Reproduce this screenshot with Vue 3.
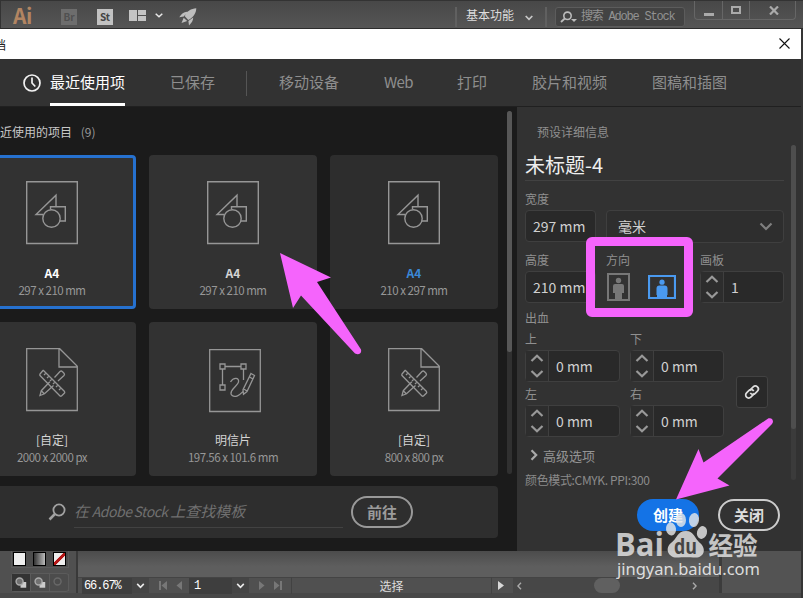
<script setup>
const groups = [
  [{ label: '最近使用项', active: true }, { label: '已保存' }],
  [{ label: '移动设备' }, { label: 'Web', latin: true }, { label: '打印' }, { label: '胶片和视频' }, { label: '图稿和插图' }]
]
const presets = [
  { name: 'A4', size: '297 x 210 mm', icon: 'shapes', state: 'selected' },
  { name: 'A4', size: '297 x 210 mm', icon: 'shapes', state: '' },
  { name: 'A4', size: '210 x 297 mm', icon: 'shapes', state: 'hover' },
  { name: '[自定]', size: '2000 x 2000 px', icon: 'tools', state: '' },
  { name: '明信片', size: '197.56 x 101.6 mm', icon: 'vector', state: '' },
  { name: '[自定]', size: '800 x 800 px', icon: 'tools', state: '' }
]
const bleeds = [['上', '下'], ['左', '右']]
</script>

<template>
  <div class="window">
    <header class="appbar">
      <span class="ai">Ai</span>
      <span class="badge br">Br</span>
      <span class="badge st">St</span>
      <svg class="layout" width="17" height="11" viewBox="0 0 17 11"><path fill="#c4c4c4" d="M0 0h8v11H0zM9 0h8v5H9zM9 6h8v5H9z" /></svg>
      <svg class="caret1" width="8" height="5" viewBox="0 0 8 5"><path d="M.7.7 4 3.8 7.3.7" fill="none" stroke="#e8e8e8" stroke-width="1.5" /></svg>
      <svg class="rocket" width="18" height="18" viewBox="0 0 18 18"><path fill="#bdbdbd" d="M17.3.3C12 .8 7.8 3 5.8 8.2L9.3 11.900C14.500 9.500 17 5.500 17.300.3zM8.500 3.800C5 3.600 2.500 5.800.3 9.200l4.500-.8zM14.200 9.600c0 3-1.600 5.500-4.200 8l-.6-4.700zM4.700 9.800 2.500 14.900l5.700-1.900z" /></svg>
      <i class="vline"></i>
      <span class="workspace">基本功能</span>
      <svg class="caret2" width="8" height="6" viewBox="0 0 8 6"><path d="M.7 1 4 4.300 7.300 1" fill="none" stroke="#c8c8c8" stroke-width="1.700" /></svg>
      <i class="vline"></i>
      <div class="stock">
        <svg width="18" height="12" viewBox="0 0 18 12"><circle cx="7.500" cy="4.800" r="3.700" fill="none" stroke="#bbb" stroke-width="1.600" /><path d="M4.800 7.500 1 11" stroke="#bbb" stroke-width="1.800" /><path d="M11 8h6l-3 3z" fill="#bbb" /></svg>
        <span>搜索 Adobe Stock</span>
      </div>
      <div class="winbtns">
        <span><svg width="10" height="13" viewBox="0 0 10 13"><path d="M0 9h10v3H0z" fill="#aaa" /></svg></span>
        <span><svg width="10" height="8" viewBox="0 0 10 8"><path d="M1 1h8v6H1z" fill="none" stroke="#aaa" stroke-width="2" /></svg></span>
        <span><svg width="10" height="9" viewBox="0 0 10 9"><path d="m1 .5 8 8M9 .5l-8 8" stroke="#aaa" stroke-width="2.200" /></svg></span>
      </div>
    </header>

    <main class="dialog">
      <div class="titlebar">
        <span>档</span>
        <svg width="11" height="11" viewBox="0 0 11 11"><path d="m.5.5 10 10M10.500.5l-10 10" stroke="#111" stroke-width="1.100" /></svg>
      </div>
      <nav class="tabs">
        <svg class="clock" width="18" height="18" viewBox="0 0 18 18" fill="none" stroke="#f2f2f2" stroke-width="1.700"><circle cx="9" cy="9" r="8" /><path d="M9 3.500V9l3.300 3.500" /></svg>
        <template v-for="(group, g) in groups" :key="g">
          <i v-if="g" class="tabsep"></i>
          <div class="tabgroup">
            <span v-for="tab in group" :key="tab.label" class="tab" :class="{ active: tab.active, latin: tab.latin }">{{ tab.label }}</span>
          </div>
        </template>
      </nav>

      <div class="body">
        <section class="gallery">
          <div class="scroller">
            <div class="list">
              <h2 class="recent">近使用的项目 <small>(9)</small></h2>
              <div class="cards">
                <article v-for="(p, i) in presets" :key="i" class="card" :class="p.state">
                  <svg v-if="p.icon === 'shapes'" class="doc" width="52" height="64" viewBox="0 0 52 64" fill="none" stroke="#969696" stroke-width="1.400">
                    <path d="M.7.7h50.600v61.800H.7z" />
                    <circle cx="25.500" cy="37.500" r="8.700" />
                    <path d="M17.200 33.500H10L30 14.200v11.600M24.500 28.500v-2.700h14.800V40H34" />
                  </svg>
                  <svg v-else-if="p.icon === 'tools'" class="doc" width="52" height="64" viewBox="0 0 52 64" fill="none" stroke="#969696" stroke-width="1.300">
                    <path d="M.7.7h33l17.600 17.600v44.200H.7zM33 1v18h18" />
                    <path d="m17.500 22.500 21 21a1.300 1.300 0 0 1 0 1.500l-3 3a1.300 1.300 0 0 1-1.500 0l-20-20.500a1.300 1.300 0 0 1 0-1.500l3-3.500zM20 25l-2 2M23 28l-2 2M26 31l-2 2M29 34l-2 2M32 37l-2 2M35 40l-2 2" />
                    <path d="m28.500 29.500 5.500-6q1.200-1 2.300 0l1.700 1.700q1 1.100 0 2.300L32 33M27.500 37.500l-9 8.300-4.500 1.700 1.300-4.800 8.500-9M15.500 43l3 3" />
                  </svg>
                  <svg v-else class="doc vector" width="52" height="64" viewBox="0 0 52 64" fill="none" stroke="#969696" stroke-width="1.300">
                    <path d="M.7.7h50.600v61.800H.7zM11 15h5v5h-5zM32 15h5v5h-5zM11 36h5v5h-5zM16 17.500h16M13.500 20v16M34.500 20v11" />
                    <path d="M21.500 33c3-5 9-4.500 8 .2-.6 2.600-5 5-7 9-1.700 3.700 1.500 6.400 6 4.600 2.500-1 4-2.800 5.500-4.300M42 24.500l3.500 2-7.500 16-3.500 2.800-.5-4.700zM34 39.500l4 2.500M40.500 28l3.500 2" />
                  </svg>
                  <h3>{{ p.name }}</h3>
                  <p>{{ p.size }}</p>
                </article>
              </div>
            </div>
            <div class="track"><i></i></div>
          </div>
          <div class="find">
            <svg width="18" height="18" viewBox="0 0 18 18" fill="none" stroke="#a2a2a2"><circle cx="11" cy="7" r="5.600" stroke-width="1.800" /><path d="m6.900 11-5.400 5.500" stroke-width="2.500" /></svg>
            <div class="findinput">在 <span>Adobe Stock</span> 上查找模板</div>
            <button class="pill go">前往</button>
          </div>
        </section>

        <aside class="details">
          <div class="caption">预设详细信息</div>
          <div class="form">
            <div class="fields">
              <div class="docname">未标题-4</div>
              <label class="lb w">宽度</label>
              <div class="row">
                <div class="input num">297 mm</div>
                <div class="input unit"><span>毫米</span><svg width="14" height="9" viewBox="0 0 14 9"><path d="m1.500 1.500 5.500 5.500 5.500-5.500" fill="none" stroke="#7f7f7f" stroke-width="2.200" /></svg></div>
              </div>
              <div class="sizes">
                <div><label class="lb">高度</label><div class="input num">210 mm</div></div>
                <div>
                  <label class="lb">方向</label>
                  <div class="orient">
                    <svg width="23" height="28" viewBox="0 0 23 28"><path d="M1 1h21v26H1z" fill="none" stroke="#777" stroke-width="2" /><circle cx="11.500" cy="7.500" r="2.700" fill="#777" /><path d="M8 11h7q2 0 2 2v7h-2v6H8v-6H6v-7q0-2 2-2" fill="#777" /></svg>
                    <svg width="28" height="24" viewBox="0 0 28 24"><path d="M1 1h26v22H1z" fill="none" stroke="#4a9af0" stroke-width="2.200" /><circle cx="14" cy="7.200" r="2.600" fill="#4a9af0" /><path d="M11.500 10.500h5q3 0 3 3V20H19v3H9v-3h-.5v-6.500q0-3 3-3" fill="#4a9af0" /></svg>
                  </div>
                </div>
                <div>
                  <label class="lb">画板</label>
                  <div class="input step board"><span class="arrows"><svg width="14" height="24" viewBox="0 0 14 24"><path d="M1.500 7 7 1.700 12.500 7M1.500 17 7 22.300 12.500 17" fill="none" stroke="#999" stroke-width="2.200" /></svg></span><b>1</b></div>
                </div>
              </div>
              <div class="bleedtitle">出血</div>
              <div class="bleedbox">
                <div class="bleeds">
                  <div v-for="(pair, r) in bleeds" :key="r" class="pair">
                    <div v-for="side in pair" :key="side">
                      <label class="side">{{ side }}</label>
                      <div class="input step"><span class="arrows"><svg width="14" height="24" viewBox="0 0 14 24"><path d="M1.500 7 7 1.700 12.500 7M1.500 17 7 22.300 12.500 17" fill="none" stroke="#999" stroke-width="2.200" /></svg></span><b>0 mm</b></div>
                    </div>
                  </div>
                </div>
                <div class="link"><svg width="18" height="18" viewBox="0 0 18 18" fill="none" stroke="#ddd" stroke-width="1.700"><g transform="rotate(-45 9 9)"><path d="M9.800 11.800H4.500a3 3 0 0 1 0-6H8a3 3 0 0 1 2.800 3.800" /><path d="M8.200 6.200h5.300a3 3 0 0 1 0 6H10a3 3 0 0 1-2.800-3.800" /></g></svg></div>
              </div>
              <div class="advanced"><svg width="8" height="12" viewBox="0 0 8 12"><path d="m1.500 1.200 4.700 4.800-4.700 4.800" fill="none" stroke="#aaa" stroke-width="2.200" /></svg>高级选项</div>
              <div class="mode">颜色模式:CMYK. PPI:300</div>
            </div>
            <div class="track"><i></i></div>
          </div>
          <div class="actions">
            <button class="pill create">创建</button>
            <button class="pill close">关闭</button>
          </div>
        </aside>
      </div>
    </main>

    <footer class="workspacebar">
      <div class="toolbox">
        <div class="swatches"><i class="white"></i><i class="grad"></i><i class="none"></i></div>
        <div class="modes">
          <svg v-for="n in 3" :key="n" width="19" height="17" viewBox="0 0 19 17" :class="'m' + n"><path d="M9 8h6v6H9z" class="sq" /><circle cx="8" cy="7.500" r="3.700" /></svg>
        </div>
      </div>
      <div class="canvas">
        <div class="art"></div>
        <div class="status">
          <span class="zoom">66.67%</span>
          <svg class="drop" width="8" height="6" viewBox="0 0 8 6"><path d="M.7.9 4 4.300 7.300.9" fill="none" stroke="#ececec" stroke-width="1.600" /></svg>
          <svg class="nav" width="24" height="9" viewBox="0 0 24 9"><path d="M0 0h2v9H0zM8 0v9L2.500 4.500zM23 0v9l-5.500-4.500z" fill="#777" /></svg>
          <span class="page">1</span>
          <svg class="drop" width="8" height="6" viewBox="0 0 8 6"><path d="M.7.9 4 4.300 7.300.9" fill="none" stroke="#ececec" stroke-width="1.600" /></svg>
          <svg class="nav" width="24" height="9" viewBox="0 0 24 9"><path d="M0 0v9l5.500-4.500zM15 0v9l5.500-4.500zM21 0h2v9h-2z" fill="#777" /></svg>
          <span class="tool">选择</span>
          <svg class="play" width="6" height="9" viewBox="0 0 6 9"><path d="M0 0v9l6-4.500z" fill="#d8d8d8" /></svg>
          <div class="hscroll">
            <svg width="5" height="8" viewBox="0 0 5 8"><path d="M4 .7.900 4 4 7.300" fill="none" stroke="#aaa" stroke-width="1.400" /></svg>
            <i></i>
            <svg width="5" height="8" viewBox="0 0 5 8"><path d="M1 .7 4.100 4 1 7.300" fill="none" stroke="#aaa" stroke-width="1.400" /></svg>
          </div>
        </div>
      </div>
      <div class="rightdock"></div>
    </footer>

    <svg class="marks" width="803" height="598" viewBox="0 0 803 598">
      <g fill="#f564fc">
        <path d="M280 253 331 277.500 317 282 361 349.500Q362 354 357.500 354.300L355 353.500 301 295.500 293 308z" />
        <path d="M676 499.500 698.500 449 703.500 462.500 768.500 418.300Q773 417.500 773 422L772 424 717.500 478.500 729.500 485.500z" />
      </g>
      <rect x="590.500" y="241.500" width="98" height="71" rx="1.500" fill="none" stroke="#f564fc" stroke-width="9" stroke-linejoin="round" />
      <g class="watermark">
        <text x="615" y="556" class="brand" textLength="49" lengthAdjust="spacingAndGlyphs">Bai</text>
        <ellipse cx="671" cy="529" rx="5" ry="6.500" transform="rotate(-8 671 529)" />
        <ellipse cx="681" cy="520" rx="5" ry="7" />
        <ellipse cx="694" cy="520" rx="5" ry="7" transform="rotate(8 694 520)" />
        <ellipse cx="702" cy="532.500" rx="5" ry="6.500" transform="rotate(15 702 532.500)" />
        <path d="M686 531C677 531 677 539 671 543C664 549 669 558 677 557.500C682 557 690 557 695 557.500C704 558 707 549 700 543C695 539 694 531 686 531" />
        <text x="674" y="553.500" class="du" textLength="23" lengthAdjust="spacingAndGlyphs">du</text>
        <text x="708.500" y="555" class="jy" textLength="49">经验</text>
        <text x="617" y="575" class="url" textLength="143" lengthAdjust="spacingAndGlyphs">jingyan.baidu.com</text>
      </g>
    </svg>
  </div>
</template>

<style>
body { margin: 0; overflow: hidden; background: #535353; }
</style>

<style scoped>
* { box-sizing: border-box; }
i, b { font-style: normal; font-weight: 400; display: block; }
svg { display: block; flex: none; }
.window { position: relative; width: 803px; height: 598px; overflow: hidden; display: flex; flex-direction: column; background: #353535; font-family: "Noto Sans CJK SC", "Noto Sans", sans-serif; white-space: nowrap; }

.appbar { display: grid; grid-template-columns: 48px 36px 32px 26px 24px 276px 11px 59px 20px 10px 139px 109px; width: 803px; height: 29px; padding-left: 12px; border-top: 1px solid #333; border-bottom: 1px solid #2c2c2c; border-left: 1px solid #333; background: linear-gradient(#484848, #555); }
.ai { font: 700 21px/28px "Noto Sans CJK SC", sans-serif; color: #b28562; letter-spacing: -.5px; }
.badge { width: 16px; height: 16px; margin-top: 8px; font: 700 10px/16px "Noto Sans CJK SC", sans-serif; text-align: center; }
.br { background: #6d6d6d; color: #505050; }
.st { background: #c2c2c2; color: #444; }
.layout { margin-top: 9px; }
.caret1 { margin-top: 12px; }
.rocket { margin-top: 7px; }
.vline { width: 2px; height: 20px; margin-top: 6px; background: #606060; }
.workspace { font-size: 12px; line-height: 28px; color: #ddd; }
.caret2 { margin-top: 14px; }
.stock { display: flex; align-items: center; width: 130px; height: 20px; margin-top: 6px; padding: 0 0 1px 4px; gap: 3px; border: 1px solid #5c5c5c; border-radius: 3px; background: #434343; color: #929292; font: 12px/16px "Liberation Mono", "Noto Sans CJK SC", monospace; }
.stock span { letter-spacing: -1.2px; }
.winbtns { display: grid; grid-template-columns: 28px 27px 47px; width: 102px; height: 19px; border: 1px solid #666; border-top: 0; border-radius: 0 0 4px 4px; }
.winbtns span { display: flex; align-items: center; justify-content: center; border-right: 1px solid #666; }
.winbtns span:last-child { border: 0; }

.dialog { width: 801px; height: 522px; display: flex; flex-direction: column; background: #323232; }
.titlebar { height: 30px; flex: none; display: flex; justify-content: space-between; align-items: center; padding-right: 11px; background: #fff; color: #222; font-size: 12px; }
.titlebar span { margin-left: -6px; }
.titlebar svg { margin-top: -2px; }
.tabs { height: 48px; flex: none; display: flex; padding-left: 23px; border-bottom: 1px solid #202020; }
.clock { margin: 15px 9px 0 0; }
.tabgroup { display: flex; gap: 45px; }
.tab { height: 47px; font-size: 15px; line-height: 46px; color: #8e8e8e; }
.tab.latin { width: 28px; letter-spacing: -.6px; }
.tab.active { color: #fff; border-bottom: 3px solid #fff; }
.tabsep { width: 1px; height: 25px; margin: 12px 32px 0 31px; background: #555; }
.body { flex: 1; min-height: 0; display: flex; }
.gallery { width: 517px; padding-top: 4px; background: #1b1b1b; }
.scroller { display: flex; height: 375px; }
.list { width: 507px; overflow: hidden; }
.recent { height: 44px; margin: 0; font-size: 12px; font-weight: 400; line-height: 42px; color: #c8c8c8; }
.recent small { margin-left: 6px; font-size: 12px; color: #999; }
.cards { display: grid; grid-template-columns: repeat(3, 168px); grid-auto-rows: 154px; gap: 13px; margin-left: -32px; }
.card { display: flex; flex-direction: column; align-items: center; padding-top: 26px; border-radius: 4px; background: #323232; }
.card.selected { padding-top: 23px; border: 3px solid #2671cf; }
.card.hover { background: #2d2d2d; }
.doc.vector { margin-left: 4px; margin-top: 1px; margin-bottom: -1px; }
.card h3 { margin: 20px 0 0; font-size: 12px; font-weight: 400; line-height: 16px; color: #d4d4d4; }
.card h3, .card p { height: 17px; }
.card.selected h3 { font-weight: 700; color: #fff; }
.card:nth-child(2) h3 { font-weight: 700; }
.card.hover h3 { font-weight: 700; color: #3b88d6; }
.card p { margin: 0; font-size: 11.5px; letter-spacing: -.5px; line-height: 16px; color: #979797; }
.track { width: 5px; border-radius: 3px; background: #303030; }
.scroller .track { height: 363px; }
.track i { height: 241px; border-radius: 3px; background: #575757; }
.find { display: flex; width: 498px; height: 52px; padding-left: 48px; border-radius: 0 4px 4px 0; background: #2e2e2e; }
.find > svg { margin-top: 17px; }
.findinput { width: 269px; height: 42px; margin: 0 8px; border-bottom: 1px solid #424242; color: #707070; font-size: 15px; font-style: italic; line-height: 50px; word-spacing: -.7px; }
.findinput span { font-size: 14px; letter-spacing: -.45px; }
.pill { width: 62px; height: 32px; padding: 0; border: 2px solid #999; border-radius: 16px; background: transparent; color: #9b9b9b; font: 700 15px/28px "Noto Sans CJK SC", sans-serif; }
.go { margin-top: 10px; }

.details { width: 284px; padding-left: 8px; }
.caption { height: 38px; padding-left: 12px; font-size: 12px; line-height: 50px; color: #8f8f8f; }
.form { display: flex; height: 341px; }
.fields { width: 266px; overflow: hidden; }
.docname { width: 259px; height: 36px; border-bottom: 1px solid #424242; font-size: 20px; line-height: 39px; color: #eee; }
.lb, .side { display: block; font-size: 12px; color: #909090; }
.lb { height: 28px; line-height: 35px; }
.lb.w { height: 29px; }
.row { display: flex; gap: 10px; height: 33px; }
.input { height: 32px; border: 1px solid #3f3f3f; border-radius: 4px; background: #292929; color: #d0d0d0; font-size: 14px; line-height: 31px; }
.num { width: 71px; padding-left: 7px; }
.unit { width: 178px; height: 33px; display: flex; align-items: center; justify-content: space-between; padding: 0 10px 0 11px; background: #2e2e2e; }
.sizes { display: grid; grid-template-columns: 81px 94px 84px; height: 60px; }
.sizes .lb { line-height: 33px; }
.orient { display: flex; align-items: center; gap: 18px; margin-top: 2px; padding-left: 1px; }
.step { display: flex; width: 95px; }
.step.board { width: 84px; }
.arrows { display: flex; align-items: center; justify-content: center; width: 23px; border-right: 1px solid #3f3f3f; background: #2d2d2d; }
.step b { padding-left: 7px; }
.bleedtitle { height: 24px; font-size: 12px; line-height: 29px; color: #909090; }
.bleedbox { display: flex; align-items: center; height: 110px; }
.bleeds { width: 211px; }
.pair { display: grid; grid-template-columns: 105px 94px; height: 55px; }
.pair > div:last-child .step { width: 94px; }
.side { height: 23px; line-height: 24px; }
.link { display: flex; align-items: center; justify-content: center; width: 32px; height: 32px; margin-top: 20px; border: 1px solid #424242; border-radius: 3px; background: #292929; }
.advanced { display: flex; align-items: center; gap: 5px; height: 36px; padding-left: 5px; font-size: 13px; color: #959595; }
.mode { height: 13px; font-size: 12px; letter-spacing: -.35px; line-height: 13px; color: #8b8b8b; }
.form .track { height: 335px; background: #3b3b3b; }
.form .track i { height: 284px; background: #4e4e4e; }
.actions { display: flex; gap: 19px; padding: 13px 0 0 112px; }
.create { border-color: #1473e6; background: #1473e6; color: #fff; }
.close { border-color: #ccc; color: #ddd; }

.workspacebar { display: flex; height: 47px; width: 801px; border-bottom: 5px solid #484848; background: #505050; }
.toolbox { width: 78px; padding-left: 11px; border-right: 2px solid #393939; }
.swatches, .modes { display: flex; width: 58px; background: #4c4c4c; border: 1px solid #5b5b5b; }
.swatches { height: 17px; gap: 7px; padding: 0 0 0 1px; border-top: 0; }
.swatches i { width: 13px; height: 14px; margin-top: 1px; border: 1px solid #000; }
.white { background: #eee; }
.grad { background: linear-gradient(90deg, #333, #bbb); }
.none { background: linear-gradient(135deg, #eee 39%, #b51616 40% 60%, #eee 61%); }
.modes { height: 19px; margin-top: 5px; border-radius: 3px; }
.modes svg { border-right: 1px solid #5b5b5b; }
.modes circle { fill: #707070; stroke: #aaa; stroke-width: 1.5; }
.modes .sq { fill: #ccc; }
.modes .m1 { background: #333; }
.modes .m3 .sq { fill: none; }
.modes .m3 circle { fill: none; stroke: #686868; }
.canvas { width: 641px; }
.art { height: 26px; background: linear-gradient(#4c4c4c, #5e5e5e 60%); }
.status { display: flex; align-items: center; height: 16px; padding-left: 4px; border-top: 1px solid #444; background: #505050; font: 12px/16px "Liberation Mono", monospace; color: #fff; }
.zoom { width: 50px; padding-left: 2px; background: #3e3e3e; letter-spacing: -1.1px; }
.drop { width: 17px; height: 15px; padding: 5px 4px 4px; background: #454545; }
.nav { margin: 0 6px 0 10px; }
.page { width: 43px; padding-left: 5px; background: #3e3e3e; }
.tool { width: 201px; margin-left: 2px; border: 1px solid #424242; border-width: 0 1px; text-align: center; font: 12px/17px "Noto Sans CJK SC", sans-serif; color: #ddd; }
.play { margin: 0 9px 0 6px; }
.hscroll { display: flex; flex: 1; align-items: center; height: 15px; padding: 0 0 0 4px; background: #474747; }
.hscroll i { width: 26px; height: 15px; margin: 0 72px 0 72px; border-radius: 8px; background: #606060; }
.rightdock { flex: 1; border-left: 3px solid #3c3c3c; background: #535353; }

.marks { position: absolute; inset: 0; }
.watermark { fill: #e6e6e6; fill-opacity: .82; }
.brand { font: 700 33px "Open Sans", sans-serif; }
.du { font: 700 21px "Open Sans", sans-serif; fill: #444; fill-opacity: 1; }
.jy { font: 700 24.500px "Noto Sans CJK SC", sans-serif; }
.url { font: 17px "Noto Sans", sans-serif; fill-opacity: .95; }
</style>
